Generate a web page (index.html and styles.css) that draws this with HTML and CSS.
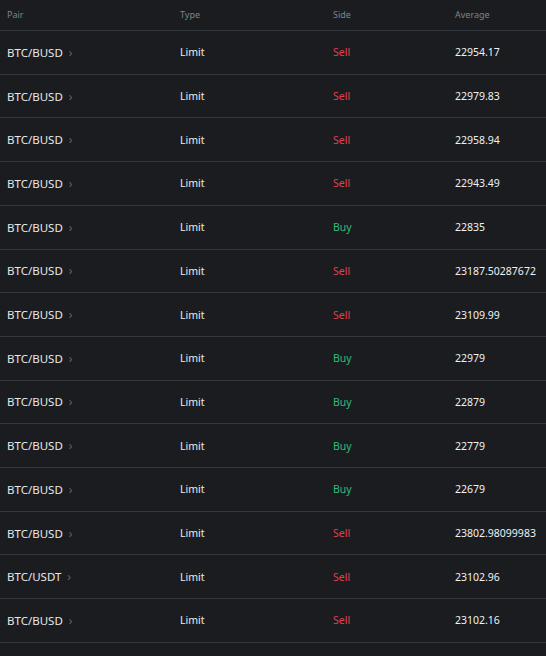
FILE: index.html
```html
<!DOCTYPE html>
<html>
<head>
<meta charset="utf-8">
<link rel="stylesheet" href="styles.css">
</head>
<body>
<div class="table">
  <div class="row head">
    <div>Pair</div><div>Type</div><div>Side</div><div>Average</div>
  </div>
  <div class="row"><div class="pair">BTC/BUSD <span class="chev">›</span></div><div>Limit</div><div class="sell">Sell</div><div class="num">22954.17</div></div>
  <div class="row"><div class="pair">BTC/BUSD <span class="chev">›</span></div><div>Limit</div><div class="sell">Sell</div><div class="num">22979.83</div></div>
  <div class="row"><div class="pair">BTC/BUSD <span class="chev">›</span></div><div>Limit</div><div class="sell">Sell</div><div class="num">22958.94</div></div>
  <div class="row"><div class="pair">BTC/BUSD <span class="chev">›</span></div><div>Limit</div><div class="sell">Sell</div><div class="num">22943.49</div></div>
  <div class="row"><div class="pair">BTC/BUSD <span class="chev">›</span></div><div>Limit</div><div class="buy">Buy</div><div class="num">22835</div></div>
  <div class="row"><div class="pair">BTC/BUSD <span class="chev">›</span></div><div>Limit</div><div class="sell">Sell</div><div class="num">23187.50287672</div></div>
  <div class="row"><div class="pair">BTC/BUSD <span class="chev">›</span></div><div>Limit</div><div class="sell">Sell</div><div class="num">23109.99</div></div>
  <div class="row"><div class="pair">BTC/BUSD <span class="chev">›</span></div><div>Limit</div><div class="buy">Buy</div><div class="num">22979</div></div>
  <div class="row"><div class="pair">BTC/BUSD <span class="chev">›</span></div><div>Limit</div><div class="buy">Buy</div><div class="num">22879</div></div>
  <div class="row"><div class="pair">BTC/BUSD <span class="chev">›</span></div><div>Limit</div><div class="buy">Buy</div><div class="num">22779</div></div>
  <div class="row"><div class="pair">BTC/BUSD <span class="chev">›</span></div><div>Limit</div><div class="buy">Buy</div><div class="num">22679</div></div>
  <div class="row"><div class="pair">BTC/BUSD <span class="chev">›</span></div><div>Limit</div><div class="sell">Sell</div><div class="num">23802.98099983</div></div>
  <div class="row"><div class="pair">BTC/USDT <span class="chev">›</span></div><div>Limit</div><div class="sell">Sell</div><div class="num">23102.96</div></div>
  <div class="row"><div class="pair">BTC/BUSD <span class="chev">›</span></div><div>Limit</div><div class="sell">Sell</div><div class="num">23102.16</div></div>
</div>
</body>
</html>
```
FILE: styles.css
```css
html, body {
  margin: 0;
  padding: 0;
  background: #1a1c20;
  width: 546px;
  height: 656px;
  overflow: hidden;
}
body {
  font-family: "Noto Sans", "Liberation Sans", sans-serif;
  color: #eaecef;
}
.table {
  display: flex;
  flex-direction: column;
}
.row {
  display: grid;
  grid-template-columns: 173px 153px 122px 1fr;
  padding-left: 7px;
  align-items: center;
  height: 43.714px;
  box-sizing: border-box;
  border-bottom: 1px solid #34373c;
  font-size: 10.5px;
}
.row.head {
  height: 31px;
  padding-bottom: 1px;
  font-size: 9px;
  color: #7d838c;
}
.pair {
  font-size: 11.5px;
  color: #e6e8ea;
}
.chev {
  color: #60656b;
  font-size: 12px;
  margin-left: 3px;
}
.sell { color: #e0404f; }
.buy { color: #2ebd78; }
.num { color: #f0f1f2; }
```
